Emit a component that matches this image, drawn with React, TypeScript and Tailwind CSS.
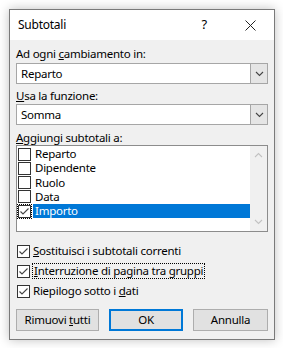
import React from "react";

const font = { fontFamily: '"Noto Sans", "Liberation Sans", sans-serif' };

function Check({ checked, focus }: { checked?: boolean; focus?: boolean }) {
  return (
    <div className="relative h-[13px] w-[13px] shrink-0 border border-[#333] bg-white">
      {checked && (
        <svg width="11" height="11" viewBox="0 0 11 11" className="absolute left-0 top-0">
          <path d="M1.5 5.5 L4 8 L9.5 2.5" fill="none" stroke="#444" strokeWidth="1.1" />
        </svg>
      )}
      {focus && (
        <div className="absolute -inset-[2px] border border-dotted border-black" />
      )}
    </div>
  );
}

function Chevron({ up, color = "#444" }: { up?: boolean; color?: string }) {
  return (
    <svg width="9" height="6" viewBox="0 0 9 6">
      <path
        d={up ? "M1 5 L4.5 1.5 L8 5" : "M1 1 L4.5 4.5 L8 1"}
        fill="none"
        stroke={color}
        strokeWidth="1.1"
      />
    </svg>
  );
}

function Select({ value }: { value: string }) {
  return (
    <div className="flex h-[21px] w-[252px] border border-[#a6a6a6] bg-white">
      <div className="flex-1 pl-[4px] leading-[19px]">{value}</div>
      <div className="flex w-[17px] items-center justify-center border-l border-[#a6a6a6] bg-[#e5e5e5]">
        <Chevron />
      </div>
    </div>
  );
}

const items = ["Reparto", "Dipendente", "Ruolo", "Data", "Importo"];

export default function App() {
  return (
    <div
      className="h-[348px] w-[283px] bg-white pl-[9px] pt-[9px] text-[11.5px] tracking-[-0.25px] text-black"
      style={font}
    >
      <div className="flex h-[331px] w-[266px] flex-col border border-[#7a7a7a] bg-[#f0f0f0] shadow-[0_0_10px_rgba(0,0,0,0.25)]">
        {/* Title bar */}
        <div className="flex h-[30px] items-center bg-white pl-[8px]">
          <span className="flex-1 text-[12px]">Subtotali</span>
          <span className="mr-[38px] text-[13px]">?</span>
          <svg width="11" height="11" viewBox="0 0 11 11" className="mr-[18px]">
            <path d="M0.5 0.5 L10.5 10.5 M10.5 0.5 L0.5 10.5" stroke="#222" strokeWidth="1" />
          </svg>
        </div>

        {/* Body */}
        <div className="flex flex-col pl-[6px] pt-[6px]">
          <div className="leading-[15px]">
            Ad ogni <u>c</u>ambiamento in:
          </div>
          <div className="mt-[2px]">
            <Select value="Reparto" />
          </div>
          <div className="mt-[4px] leading-[15px]">
            <u>U</u>sa la funzione:
          </div>
          <div className="mt-[1px]">
            <Select value="Somma" />
          </div>
          <div className="mt-[5px] leading-[15px]">
            <u>A</u>ggiungi subtotali a:
          </div>

          {/* List */}
          <div className="flex h-[87px] w-[252px] border border-[#8c8c8c] bg-white">
            <div className="flex-1 pt-[1px]">
              {items.map((it) => {
                const sel = it === "Importo";
                return (
                  <div key={it} className="flex h-[14.25px] items-center pl-[1px]">
                    <Check checked={sel} focus={sel} />
                    <div
                      className={
                        "ml-[2px] h-[14.25px] flex-1 pl-[2px] leading-[14px] " +
                        (sel ? "bg-[#0078d7] text-white" : "")
                      }
                    >
                      {it}
                    </div>
                  </div>
                );
              })}
            </div>
            <div className="flex w-[17px] flex-col items-center justify-between bg-[#f0f0f0] py-[6px]">
              <Chevron up color="#c2c2c2" />
              <Chevron color="#c2c2c2" />
            </div>
          </div>

          {/* Options */}
          <div className="mt-[9px] flex h-[20px] items-center pl-[1px]">
            <Check checked />
            <span className="ml-[3px]">
              <u>S</u>ostituisci i subtotali correnti
            </span>
          </div>
          <div className="flex h-[20px] items-center pl-[1px]">
            <Check checked />
            <span className="ml-[2px] border border-dotted border-black px-[1px] leading-[14px]">
              <u>I</u>nterruzione di pagina tra gruppi
            </span>
          </div>
          <div className="flex h-[20px] items-center pl-[1px]">
            <Check checked />
            <span className="ml-[3px]">
              Riepilogo sotto i <u>d</u>ati
            </span>
          </div>

          {/* Buttons */}
          <div className="mt-[8px] flex h-[22px] w-[252px] gap-[10px]">
            <button className="w-[83px] border border-[#adadad] bg-[#e1e1e1]">
              Rimuovi <u>t</u>utti
            </button>
            <button className="w-[74px] border-2 border-[#0078d7] bg-[#e1e1e1]">OK</button>
            <button className="w-[75px] border border-[#adadad] bg-[#e1e1e1]">Annulla</button>
          </div>
        </div>
      </div>
    </div>
  );
}
